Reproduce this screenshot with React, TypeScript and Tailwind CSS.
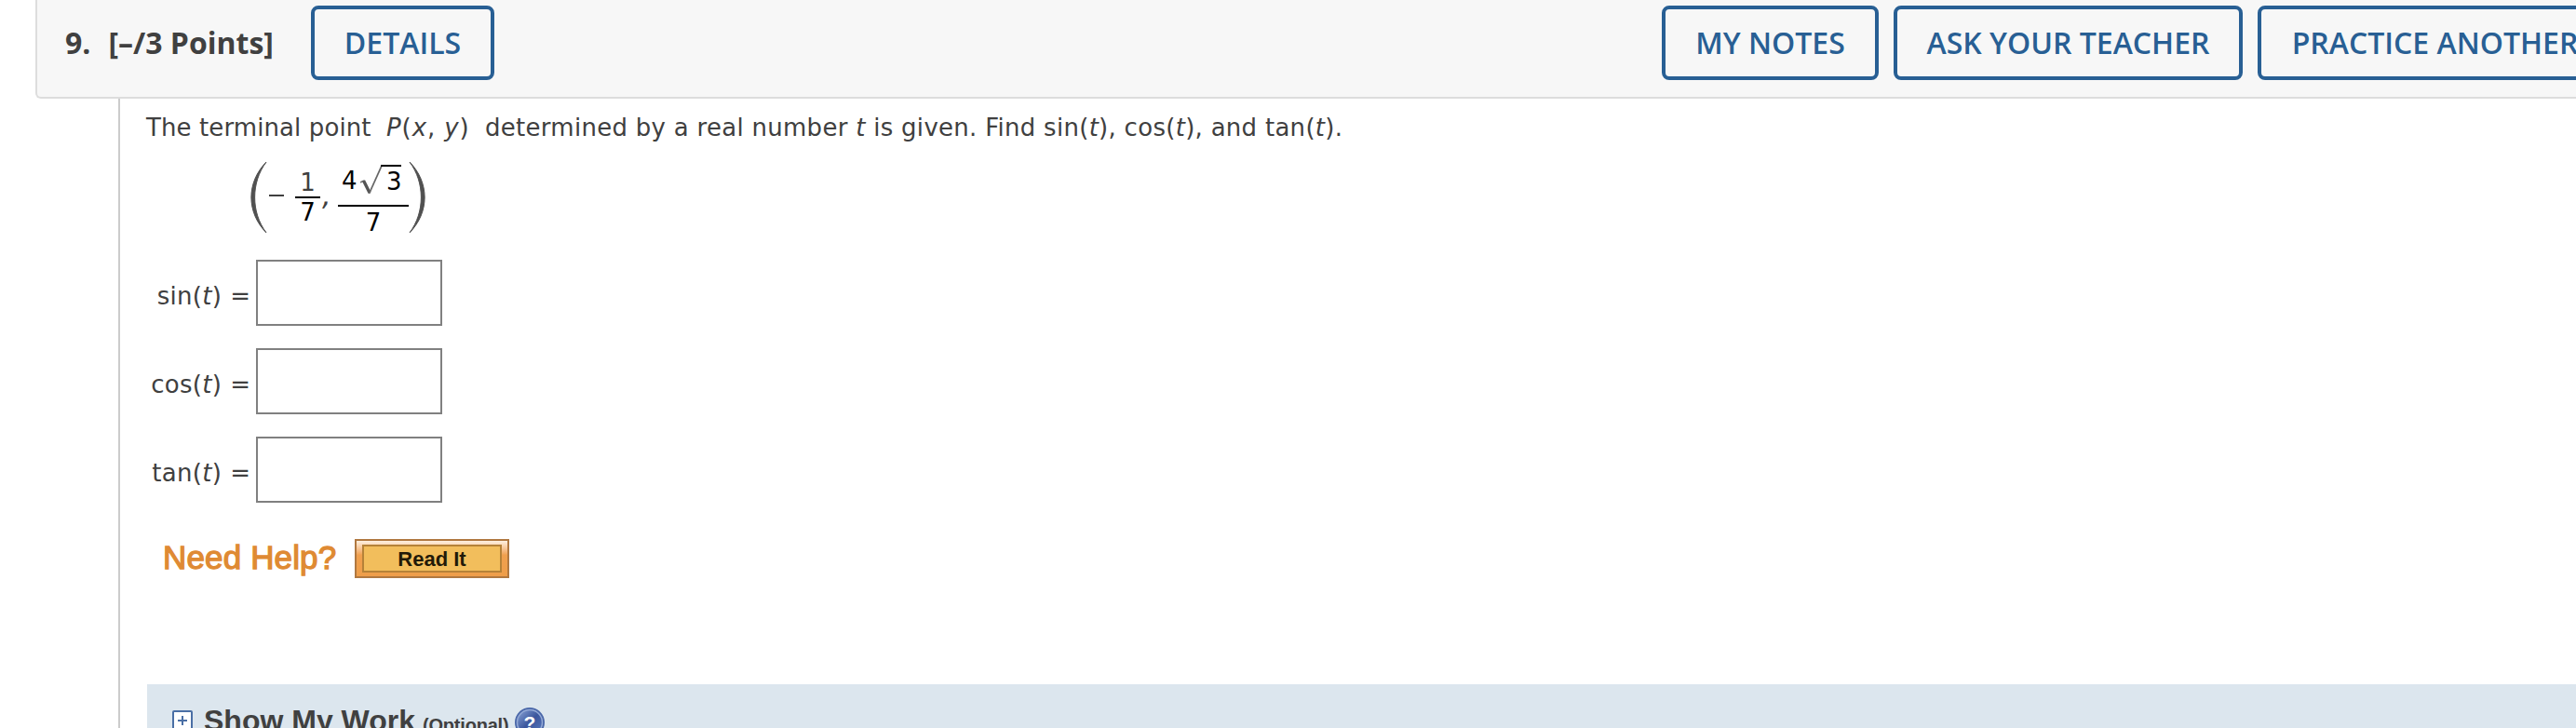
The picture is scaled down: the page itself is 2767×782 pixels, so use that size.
import { useState } from "react";

const functions = ["sin", "cos", "tan"];

const HeaderButton = ({ label, width }: { label: string; width: string }) => (
    <button
        className={`h-20 shrink-0 flex items-center justify-center whitespace-nowrap rounded-[8px] border-4 border-[#285f94] text-[32px] font-semibold text-[#285f94] ${width}`}
    >
        {label}
    </button>
);

const Header = () => (
    <div className="ml-[38px] h-[106px] w-[2800px] flex items-start rounded-bl-[6px] border-l-2 border-b-2 border-[#dddddd] bg-[#f7f7f7] pt-1.5 pl-[30px] font-['Open_Sans',sans-serif]">
        <div className="h-20 w-[264px] shrink-0 flex items-center gap-[19px] whitespace-nowrap text-[32px] font-bold text-[#404040]">
            <span>9.</span>
            <span>[–/3 Points]</span>
        </div>
        <HeaderButton label="DETAILS" width="w-[197px]" />
        <div className="ml-[1254px] flex gap-4">
            <HeaderButton label="MY NOTES" width="w-[233px]" />
            <HeaderButton label="ASK YOUR TEACHER" width="w-[375px]" />
            <HeaderButton label="PRACTICE ANOTHER" width="w-[381px]" />
        </div>
    </div>
);

const Point = () => (
    <div className="ml-[112px] mt-[17px] flex h-[78px] w-[188px] text-[26px] leading-[26px]">
        <svg className="h-[78px] w-[18px] shrink-0" viewBox="0 0 18 78" fill="#505050" stroke="#505050">
            <path d="M17 1C-4.5 23-4.5 55 17 77C0.5 55 0.5 23 17 1Z" />
        </svg>
        <div className="ml-0.5 mt-[36px] h-0.5 w-4 bg-[#404040]" />
        <div className="ml-3 mt-[10px] w-[27px] text-center">
            <div className="h-[28px]">1</div>
            <div className="h-0.5 bg-black" />
            <div className="pt-0.5 text-black">7</div>
        </div>
        <div className="mt-[24px] w-[19px] pl-0.5 text-[30px] italic">,</div>
        <div className="mt-1 w-[76px] text-black">
            <div className="flex h-[43px]">
                <span className="ml-1 mt-1 w-5">4</span>
                <svg className="h-[34px] w-[46px]" viewBox="0 0 46 34" fill="none">
                    <path d="M0 19l4-2" stroke="#777" strokeWidth="1.6" />
                    <path d="M3.5 17L10 30" stroke="#555" strokeWidth="3.4" />
                    <path d="M9.5 31L23 1" stroke="#666" strokeWidth="1.8" />
                    <path d="M22 1h22" stroke="#000" strokeWidth="2" />
                </svg>
                <span className="-ml-[18px] mt-[5px]">3</span>
            </div>
            <div className="h-0.5 bg-black" />
            <div className="pt-1 text-center">7</div>
        </div>
        <svg className="h-[78px] w-[18px] shrink-0" viewBox="0 0 18 78" fill="#505050" stroke="#505050">
            <path d="M1 1C22.5 23 22.5 55 1 77C17.5 55 17.5 23 1 1Z" />
        </svg>
    </div>
);

const ShowMyWork = () => (
    <div className="ml-px mt-[114px] flex h-[47px] items-start bg-[#dce6ee] pl-[27px] font-['Liberation_Sans',sans-serif] font-bold text-[#404040]">
        <svg className="mt-7 h-[22px] w-[22px] shrink-0" viewBox="0 0 22 22" fill="none">
            <rect x="1" y="1" width="20" height="20" rx="1" fill="#fff" stroke="#4a6fa5" strokeWidth="2" />
            <path d="M11 6v10M6 11h10" stroke="#4a6fa5" strokeWidth="2" />
        </svg>
        <span className="ml-3 mt-[21px] w-[235px] whitespace-nowrap text-[32px] leading-[36px]">Show My Work</span>
        <span className="mt-[32px] w-[99px] whitespace-nowrap text-[20px] leading-[24px] tracking-[-0.2px]">(Optional)</span>
        <svg className="mt-[25px] h-8 w-8 shrink-0" viewBox="0 0 32 32">
            <defs>
                <linearGradient id="help" x1="0" y1="0" x2="1" y2="1">
                    <stop offset="0" stopColor="#8ba6d8" />
                    <stop offset="0.5" stopColor="#3a559c" />
                    <stop offset="1" stopColor="#5b7cc0" />
                </linearGradient>
            </defs>
            <circle cx="16" cy="16" r="16" fill="#4966a8" />
            <circle cx="16" cy="16" r="13.5" fill="url(#help)" stroke="#93a9d6" strokeWidth="1.5" />
            <text x="16" y="23.5" textAnchor="middle" fontSize="21" fill="#fff">?</text>
        </svg>
    </div>
);

export default function App() {
    const [answers, setAnswers] = useState<Record<string, string>>({});

    return (
        <div className="h-[782px] w-full overflow-hidden bg-white font-['DejaVu_Sans',sans-serif] text-[#404040]">
            <Header />
            <div className="ml-[127px] h-[676px] border-l-2 border-[#cccccc] pl-7">
                <p className="flex whitespace-pre pt-[13px] text-[26px] leading-[36px]">
                    <span className="w-[258px] tracking-[0.1px]">The terminal point</span>
                    <span className="w-[106px] tracking-[0.9px]"><i>P</i>(<i>x</i>, <i>y</i>)</span>
                    <span className="tracking-[0.28px]">determined by a real number <i>t</i> is given. Find sin(<i>t</i>), cos(<i>t</i>), and tan(<i>t</i>).</span>
                </p>
                <div className="h-px" />
                <Point />

                {/* answer fields */}
                <div className="mt-7 flex flex-col gap-6">
                    {functions.map((name) => (
                        <div key={name} className="flex h-[71px] items-center">
                            <label className="w-[112px] whitespace-nowrap pt-2 text-right text-[26px]">
                                <span className="tracking-[0.3px]">{name}(<i>t</i>)</span>
                                <span className="ml-[9px]">=</span>
                            </label>
                            <input
                                className="ml-1.5 h-[71px] w-[200px] border-2 border-[#808080] bg-white px-2 text-[26px] outline-none"
                                value={answers[name] ?? ""}
                                onChange={(e) => setAnswers({ ...answers, [name]: e.target.value })}
                            />
                        </div>
                    ))}
                </div>

                <div className="ml-[18px] mt-[39px] flex h-[42px] font-['Liberation_Sans',sans-serif]">
                    <span className="w-[206px] whitespace-nowrap text-[35px] leading-[40px] tracking-[0.15px] text-[#df8a33] [-webkit-text-stroke:1.3px_#df8a33]">Need Help?</span>
                    <button className="h-[42px] w-[166px] border-2 border-[#b07840] bg-linear-to-b from-[#fdf0e0] from-0% via-[#f0a04e] via-40% to-[#ee9e4a] px-1.5 py-1">
                        <span className="flex h-full items-center justify-center border-2 border-[#b58238] bg-[#f2be5c] text-[22px] font-bold text-[#221a08]">Read It</span>
                    </button>
                </div>
                <ShowMyWork />
            </div>
        </div>
    );
}
